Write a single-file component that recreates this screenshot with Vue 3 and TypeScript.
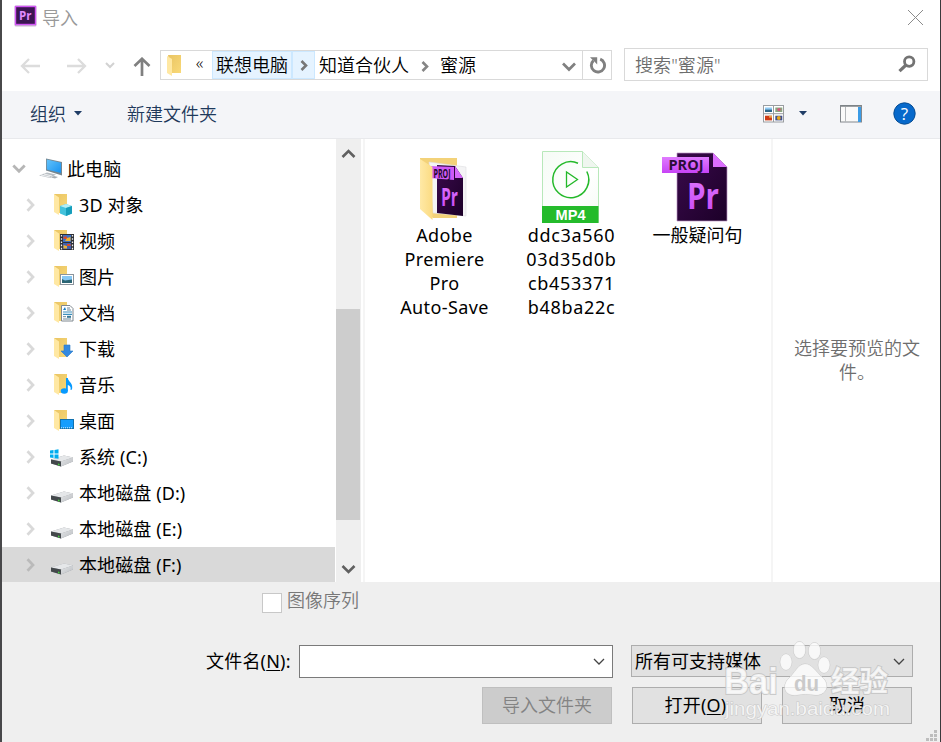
<script setup lang="ts">
interface TreeItem {
  label: string
  icon: string
  folder?: boolean
  root?: boolean
  selected?: boolean
}

interface FileItem {
  icon: 'folder' | 'mp4' | 'proj'
  lines: string[]
}

const tree: TreeItem[] = [
  { label: '此电脑', icon: 'pc', root: true },
  { label: '3D 对象', icon: 'cube', folder: true },
  { label: '视频', icon: 'video', folder: true },
  { label: '图片', icon: 'picture', folder: true },
  { label: '文档', icon: 'document', folder: true },
  { label: '下载', icon: 'download', folder: true },
  { label: '音乐', icon: 'music', folder: true },
  { label: '桌面', icon: 'desktop', folder: true },
  { label: '系统 (C:)', icon: 'system' },
  { label: '本地磁盘 (D:)', icon: 'disk' },
  { label: '本地磁盘 (E:)', icon: 'disk' },
  { label: '本地磁盘 (F:)', icon: 'disk', selected: true },
]

const files: FileItem[] = [
  { icon: 'folder', lines: ['Adobe', 'Premiere', 'Pro', 'Auto-Save'] },
  { icon: 'mp4', lines: ['ddc3a560', '03d35d0b', 'cb453371', 'b48ba22c'] },
  { icon: 'proj', lines: ['一般疑问句'] },
]
</script>

<template>
  <div class="dialog">
    <svg class="defs" width="0" height="0">
      <defs>
        <linearGradient id="gFolderFront" x1="0" y1="0" x2="1" y2="0">
          <stop offset="0" stop-color="#ffe9a6" />
          <stop offset="1" stop-color="#fbdb82" />
        </linearGradient>
        <linearGradient id="gFolderBack" x1="0" y1="0" x2="1" y2="1">
          <stop offset="0" stop-color="#e9c463" />
          <stop offset="1" stop-color="#f9d978" />
        </linearGradient>
        <linearGradient id="gPurple" x1="0" y1="0" x2="0" y2="1">
          <stop offset="0" stop-color="#e07bff" />
          <stop offset="1" stop-color="#c743f5" />
        </linearGradient>
        <linearGradient id="gDark" x1="0" y1="0" x2="1" y2="1">
          <stop offset="0" stop-color="#3a0a4c" />
          <stop offset="1" stop-color="#1c0028" />
        </linearGradient>
        <linearGradient id="gScreen" x1="0" y1="0" x2="1" y2="1">
          <stop offset="0" stop-color="#63c3fb" />
          <stop offset="1" stop-color="#1992ef" />
        </linearGradient>
        <linearGradient id="gDisk" x1="0" y1="0" x2="1" y2="1">
          <stop offset="0" stop-color="#e4e6e8" />
          <stop offset="1" stop-color="#b9bcc0" />
        </linearGradient>
        <linearGradient id="gPaper" x1="0" y1="0" x2="1" y2="1">
          <stop offset="0" stop-color="#f5fbf5" />
          <stop offset="0.6" stop-color="#ffffff" />
          <stop offset="1" stop-color="#f4faf4" />
        </linearGradient>
      </defs>
    </svg>

    <header class="titlebar">
      <svg class="app-icon" width="24" height="22" viewBox="0 0 24 22">
        <rect x="0.5" y="0.5" width="22" height="21" rx="1.5" fill="#c9b8d0" />
        <rect x="1.5" y="1.5" width="20" height="18" fill="#3b1552" stroke="#d255f5" stroke-width="1.4" />
        <text x="5" y="14.5" class="glyph" font-size="12" textLength="12.5" lengthAdjust="spacingAndGlyphs" fill="#e08bff">Pr</text>
      </svg>
      <span class="title">导入</span>
      <svg class="close" width="17" height="17" viewBox="0 0 17 17"><path d="M1 1L16 16M16 1L1 16" stroke="#8b8b8b" fill="none" /></svg>
    </header>

    <nav class="navbar">
      <svg class="back" width="20" height="16" viewBox="0 0 20 16"><path d="M9 1L2 8L9 15M2 8H20" class="stroke" stroke="#dcdcdc" stroke-width="2.3" /></svg>
      <svg class="forward" width="20" height="16" viewBox="0 0 20 16"><path d="M11 1L18 8L11 15M18 8H0" class="stroke" stroke="#dcdcdc" stroke-width="2.3" /></svg>
      <svg class="recent" width="10" height="7" viewBox="0 0 10 7"><path d="M1 1L5 5L9 1" class="stroke" stroke="#d2d2d2" stroke-width="2" /></svg>
      <svg class="up" width="18" height="19" viewBox="0 0 18 19"><path d="M1.5 9L9 1.8L16.5 9M9 2V19" class="stroke" stroke="#808080" stroke-width="2.7" /></svg>
      <div class="address">
        <svg class="address-folder" width="15" height="21" viewBox="0 0 15 21">
          <path d="M1 0H14V18H4Z" fill="url(#gFolderBack)" />
          <path d="M0 1L5 4V21L0 18Z" fill="#ffe8a3" />
        </svg>
        <span class="more">«</span>
        <span class="crumb hot">联想电脑</span>
        <span class="sep hot"><svg width="8" height="11" viewBox="0 0 8 11"><path d="M1.5 1L6 5.5L1.5 10" class="stroke" stroke="#777" stroke-width="2.6" /></svg></span>
        <span class="crumb second">知道合伙人</span>
        <svg class="sep-free" width="8" height="11" viewBox="0 0 8 11"><path d="M1.5 1L6 5.5L1.5 10" class="stroke" stroke="#858585" stroke-width="2.6" /></svg>
        <span class="crumb">蜜源</span>
        <svg class="drop" width="14" height="10" viewBox="0 0 14 10"><path d="M1 1.5L7 7.5L13 1.5" class="stroke" stroke="#808080" stroke-width="2.7" /></svg>
        <span class="refresh">
          <svg width="18" height="18" viewBox="0 0 18 18">
            <path d="M11.2 3.2A6.6 6.6 0 1 1 4.4 4.6" class="stroke" stroke="#808080" stroke-width="2.9" />
            <path d="M1 1.2H8.2V8.4L5.6 5.8L3.2 3.6Z" fill="#808080" />
          </svg>
        </span>
      </div>
      <div class="search">
        <span class="search-text">搜索"蜜源"</span>
        <svg width="18" height="18" viewBox="0 0 18 18">
          <circle cx="11.2" cy="6.6" r="4.7" fill="none" stroke="#737373" stroke-width="2.8" />
          <path d="M8 10L1.5 16.2" stroke="#737373" stroke-width="3.2" />
        </svg>
      </div>
    </nav>

    <div class="toolbar">
      <span class="organize">组织</span>
      <svg class="caret" width="8" height="5" viewBox="0 0 8 5"><path d="M0 0H8L4 4.6Z" fill="#1f3c66" /></svg>
      <span class="new-folder">新建文件夹</span>
      <svg class="views" width="22" height="18" viewBox="0 0 22 18">
        <rect x="0.5" y="0.5" width="20" height="16.5" fill="#fff" stroke="#999da1" />
        <path d="M10.5 0V17M0 8.7H21" stroke="#999da1" />
        <rect x="2" y="2.5" width="7" height="4.5" fill="#8fcaf4" /><rect x="2" y="4.6" width="7" height="2.4" fill="#2d6689" />
        <rect x="12.3" y="2.5" width="7" height="4.5" fill="#8aa67f" /><circle cx="16" cy="4.6" r="1.7" fill="#d6577c" />
        <rect x="2" y="10.7" width="7" height="4.7" fill="#ce3b16" /><rect x="6" y="10.7" width="3" height="2" fill="#eca24c" />
        <rect x="12.3" y="10.7" width="7" height="4.7" fill="#40508d" /><circle cx="15.8" cy="13" r="1.9" fill="#e6a61d" />
      </svg>
      <svg class="caret views-caret" width="8" height="5" viewBox="0 0 8 5"><path d="M0 0H8L4 4.6Z" fill="#1f3c66" /></svg>
      <svg class="pane-icon" width="22" height="18" viewBox="0 0 22 18">
        <rect x="0.5" y="0.5" width="21" height="16.5" fill="#fafafa" stroke="#83888d" />
        <path d="M1 1.2H21" stroke="#73787c" /><path d="M5.5 2V17" stroke="#b4b7ba" />
        <rect x="18" y="2" width="3" height="15" fill="#3c9ce6" />
      </svg>
      <svg class="help" width="23" height="23" viewBox="0 0 23 23">
        <circle cx="11.5" cy="11.5" r="10.7" fill="#0769cb" stroke="#084d93" />
        <text x="11.5" y="17.5" text-anchor="middle" class="glyph-regular" font-size="17" fill="#fff">?</text>
      </svg>
    </div>

    <main class="content">
      <div class="tree">
        <div v-for="item in tree" :key="item.label" class="tree-row" :class="{ root: item.root, selected: item.selected }">
          <span class="expander">
            <svg v-if="item.root" width="14" height="10" viewBox="0 0 14 10"><path d="M1.3 1.5L7 7.2L12.7 1.5" class="stroke" stroke="#b6b6b6" stroke-width="2.8" /></svg>
            <svg v-else width="9" height="14" viewBox="0 0 9 14"><path d="M1.5 1.2L7 7L1.5 12.8" class="stroke" :stroke="item.selected ? '#bababa' : '#d9d9d9'" stroke-width="2.7" /></svg>
          </span>
          <svg class="tree-icon" width="26" height="24" viewBox="0 0 26 24">
            <template v-if="item.folder">
              <path d="M5 1H18V20H8Z" fill="url(#gFolderBack)" />
              <path d="M5 1L10 4.5V22L5 19Z" fill="#ffe8a3" />
            </template>
            <g v-if="item.icon === 'pc'">
              <path d="M8 1.5L24 5V18.5L8 13.5Z" fill="#77868f" />
              <path d="M8.8 2.5L23 5.7V16L8.8 12.5Z" fill="url(#gScreen)" />
              <path d="M9 15.5L18 17.5L12 21L1 18.5Z" fill="#b9bfc4" />
              <path d="M3 18L12 20M6 17L14 19" stroke="#fff" stroke-width=".8" />
              <path d="M16 19L20 20L17 21.5L13 20.5Z" fill="#a7adb2" />
            </g>
            <g v-else-if="item.icon === 'cube'">
              <path d="M11 13L17 11L23 13V20.5L17 23L11 20.5Z" fill="#43c2dc" />
              <path d="M11 13L17 11L23 13L17 15Z" fill="#b4edf5" />
              <path d="M17 15L23 13V20.5L17 23Z" fill="#169ebb" />
            </g>
            <g v-else-if="item.icon === 'video'">
              <rect x="11" y="5" width="14" height="16" fill="#2e3036" />
              <rect x="14" y="6" width="8" height="7" fill="#3b71c5" /><rect x="14" y="14" width="8" height="6" fill="#3f60b0" />
              <path d="M14.5 7.5H18V10H14.5ZM18 15H21.5V17H18Z" fill="#d64a2e" />
              <path d="M18 9L21.5 8V12H16ZM14.5 16L18 17V19.5H14.5Z" fill="#ecb235" />
              <path d="M12.5 6V21M23.5 6V21" stroke="#eee" stroke-width="1.3" stroke-dasharray="1.6 1.6" />
            </g>
            <g v-else-if="item.icon === 'picture'">
              <rect x="11.5" y="9.5" width="13" height="10" fill="#fff" stroke="#8b949c" />
              <rect x="13" y="11" width="10" height="7" fill="#86c7f4" /><path d="M13 14L16 15.5L23 14.5V18H13Z" fill="#2b6574" />
            </g>
            <g v-else-if="item.icon === 'document'">
              <path d="M12.5 4.5H21L24 7.5V20H12.5Z" fill="#fff" stroke="#7f888f" />
              <path d="M14 11H23M14 13.3H23" stroke="#3c8fbc" stroke-width="1.2" /><path d="M18 7H21M18 9H22M14 15.7H17M14 18H22" stroke="#6d8797" />
              <path d="M14 9L16 6L17 9Z" fill="#187fc3" /><rect x="18" y="14.8" width="4" height="2" fill="#347797" />
            </g>
            <path v-else-if="item.icon === 'download'" d="M15 8H21V14H24L18 20L12 14H15Z" fill="#3489df" stroke="#2878c8" stroke-width=".6" />
            <g v-else-if="item.icon === 'music'">
              <ellipse cx="15.3" cy="18" rx="3.6" ry="2.8" fill="#079aff" />
              <path d="M17 5H18.8C19.3 9 24.5 10 23 16.5L21.5 17C22.3 13.5 20.5 12.5 18.8 12V18H17Z" fill="#079aff" />
            </g>
            <g v-else-if="item.icon === 'desktop'">
              <rect x="11.5" y="10.5" width="13" height="9" fill="#149dfd" stroke="#1171ae" />
              <path d="M12 18.8H24" stroke="#d5efff" stroke-dasharray="1 1" />
            </g>
            <g v-else-if="item.icon === 'disk' || item.icon === 'system'" transform="translate(1 1.6)">
              <path d="M1 13L14 9L23 11V15L11 20L1 17Z" fill="#9b9fa3" />
              <path d="M1 13L14 9L23 11L11 15Z" fill="#e5e7e9" />
              <path d="M11 15L23 11V15L11 20Z" fill="url(#gDisk)" />
              <path d="M1 13L11 15V20L1 17Z" fill="#43484b" />
              <path d="M8 17L9.5 17.4V19L8 18.6Z" fill="#43d53c" />
              <path v-if="item.icon === 'system'" d="M0 4L3.5 3.5V7H0ZM4.5 3.3L8.5 2.7V7H4.5ZM0 8H3.5V11.5L0 11ZM4.5 8H8.5V12.2L4.5 11.6Z" fill="#00adef" />
            </g>
          </svg>
          <span class="tree-label">{{ item.label }}</span>
        </div>
      </div>
      <div class="scrollbar">
        <svg width="15" height="11" viewBox="0 0 15 11"><path d="M1.5 9L7.5 3L13.5 9" class="stroke" stroke="#606060" stroke-width="2.6" /></svg>
        <div class="track"><div class="thumb"></div></div>
        <svg width="15" height="11" viewBox="0 0 15 11"><path d="M1.5 2L7.5 8L13.5 2" class="stroke" stroke="#606060" stroke-width="2.6" /></svg>
      </div>
      <div class="files">
        <div v-for="file in files" :key="file.icon" class="file" :class="file.icon">
          <svg v-if="file.icon === 'folder'" width="72" height="72" viewBox="0 0 72 72">
            <path d="M11 7H48V67H24L11 55Z" fill="#f3d279" />
            <path d="M20 11L57 16V65L24 62Z" fill="#f4f4f5" stroke="#dedee0" stroke-width=".6" />
            <path d="M28 14L46 15L54 27V65L28 62Z" fill="url(#gDark)" />
            <path d="M46 15L54 27H46Z" fill="#d668fb" />
            <path d="M20 15L45 16V29L20 27Z" fill="#cf59f7" />
            <text x="24.5" y="26.5" class="glyph" font-size="12" textLength="17" lengthAdjust="spacingAndGlyphs" fill="#210a2a">PROJ</text>
            <text x="32" y="55" class="glyph" font-size="25" textLength="17" lengthAdjust="spacingAndGlyphs" fill="url(#gPurple)">Pr</text>
            <path d="M11 8L23.5 16V69L11 58Z" fill="url(#gFolderFront)" />
          </svg>
          <svg v-else-if="file.icon === 'mp4'" width="72" height="72" viewBox="0 0 72 72">
            <path d="M6.5 .5H46.5L62.5 16.5V71.5H6.5Z" fill="url(#gPaper)" stroke="#b8e8ba" />
            <path d="M46.5 .5V16.5H62.5" fill="#eff6ef" stroke="#b8e8ba" />
            <path d="M42 12.2A18 18 0 1 0 50.8 20.5" class="stroke" stroke="#24b92a" stroke-width="1.5" />
            <path d="M30.5 21V36L41.5 28.5Z" class="stroke" stroke="#24b92a" stroke-width="1.3" />
            <rect x="6" y="55" width="56.5" height="17" fill="#24bb2b" />
            <text x="34.5" y="68.5" text-anchor="middle" class="mp4-text" font-size="14" textLength="30" lengthAdjust="spacingAndGlyphs" fill="#fff">MP4</text>
          </svg>
          <svg v-else width="72" height="72" viewBox="0 0 72 72">
            <path d="M15 2H51L65 16V70H15Z" fill="url(#gDark)" stroke="#ba94c3" stroke-width=".7" />
            <path d="M51 2L65 16H51Z" fill="#dc6eff" />
            <rect x="0" y="6" width="47" height="16" fill="url(#gPurple)" />
            <text x="6.5" y="19.3" class="glyph" font-size="15" textLength="35" lengthAdjust="spacingAndGlyphs" fill="#2c0d39">PROJ</text>
            <text x="25" y="58" class="glyph" font-size="35" textLength="32" lengthAdjust="spacingAndGlyphs" fill="url(#gPurple)">Pr</text>
          </svg>
          <span v-for="line in file.lines" :key="line" class="file-line">{{ line }}</span>
        </div>
      </div>
      <aside class="preview">选择要预览的文件。</aside>
    </main>

    <footer class="footer">
      <label class="sequence"><span class="checkbox"></span><span class="seq-label">图像序列</span></label>
      <div class="fields">
        <span class="name-label">文件名(<u>N</u>):</span>
        <div class="combo name-input">
          <svg width="12" height="7" viewBox="0 0 12 7"><path d="M1 1L6 6L11 1" class="stroke" stroke="#444" stroke-width="1.3" /></svg>
        </div>
        <div class="combo type-select">
          <span>所有可支持媒体</span>
          <svg width="12" height="7" viewBox="0 0 12 7"><path d="M1 1L6 6L11 1" class="stroke" stroke="#444" stroke-width="1.3" /></svg>
        </div>
      </div>
      <div class="buttons">
        <button class="btn disabled" type="button">导入文件夹</button>
        <button class="btn open" type="button">打开(<u>O</u>)</button>
        <button class="btn" type="button">取消</button>
      </div>
    </footer>

    <svg class="grip" width="11" height="11" viewBox="0 0 11 11"><path d="M8 0h3v3h-3zM4 4h3v3h-3zM8 4h3v3h-3zM0 8h3v3h-3zM4 8h3v3h-3zM8 8h3v3h-3z" fill="#bdbdbd" /></svg>

    <svg class="watermark" width="180" height="86" viewBox="0 0 180 86">
      <g fill="#fff" fill-opacity=".75" stroke="#c4c4c4" stroke-opacity=".85" paint-order="stroke">
        <ellipse cx="64" cy="23" rx="5.8" ry="8" />
        <ellipse cx="77.5" cy="11" rx="6" ry="8.3" />
        <ellipse cx="92.5" cy="12" rx="6" ry="8.3" />
        <ellipse cx="102" cy="26" rx="5.8" ry="8" />
        <path d="M83 25C90 25 94 33 100 38C109 46 104 57 93 56C87 55 80 55 75 56C63 58 59 47 67 39C73 34 76 25 83 25Z" />
        <text x="2" y="55" class="wm-bold" font-size="37" textLength="54" lengthAdjust="spacingAndGlyphs" stroke-width="2">Bai</text>
        <text x="109" y="53" class="wm-cjk" font-size="29" textLength="57" lengthAdjust="spacingAndGlyphs" stroke-width="2">经验</text>
        <text x="3" y="76" class="wm-url" font-size="19" textLength="165" lengthAdjust="spacingAndGlyphs" stroke-width="1">jingyan.baidu.com</text>
      </g>
      <text x="72" y="52" class="wm-bold" font-size="22" textLength="25" lengthAdjust="spacingAndGlyphs" fill="#cacaca">du</text>
    </svg>
  </div>
</template>

<style>
body { margin: 0; overflow: hidden; }
</style>

<style scoped>
.dialog {
  position: relative; box-sizing: border-box; width: 941px; height: 742px; display: flex; flex-direction: column;
  border-left: 2px solid #48484a; border-right: 1px solid #39393b; background: #fff; color: #000;
  font: 400 18px/24px "Noto Sans", "Noto Sans CJK SC", sans-serif;
}
svg { display: block; flex: none; }
.defs { position: absolute; }
.stroke { fill: none; }
.glyph { font-family: "Open Sans", sans-serif; font-weight: 700; }
.glyph-regular { font-family: "Open Sans", sans-serif; font-weight: 400; }
.mp4-text { font-family: "Liberation Sans", sans-serif; font-weight: 700; }

.titlebar { height: 37px; flex: none; display: flex; align-items: flex-start; box-sizing: border-box; padding: 5px 16px 0 12px; }
.title { margin: 1px 0 0 4px; color: #999; font-weight: 350; }
.close { margin: 4px 0 0 auto; }

.navbar { height: 54px; flex: none; display: flex; align-items: center; padding: 0 12px 0 18px; }
.back { margin-top: 3px; }
.forward { margin: 3px 0 0 27px; }
.recent { margin: 2px 0 0 18px; }
.up { margin: 4px 0 0 18px; }
.address { box-sizing: border-box; flex: none; width: 452px; height: 30px; margin: 2px 0 0 9px; border: 1px solid #d9d9d9; display: flex; align-items: center; white-space: nowrap; }
.address-folder { margin-left: 6px; }
.more { width: 25px; padding: 0 0 4px 5px; text-align: center; font-size: 17px; line-height: 22px; font-weight: 350; }
.crumb { line-height: 28px; font-weight: 350; }
.hot { background: #e5f3ff; box-shadow: inset 0 0 0 1px #cce8ff; }
.crumb.hot { width: 80px; text-align: center; }
.sep { width: 23px; height: 28px; display: flex; align-items: center; justify-content: center; }
.crumb.second { margin-left: 4px; }
.sep-free { margin: 2px 11px 0 12px; }
.drop { margin: 3px 6px 0 auto; }
.refresh { width: 28px; height: 28px; border-left: 1px solid #d9d9d9; display: flex; align-items: center; justify-content: center; }
.refresh svg { margin-left: 1px; }
.search { box-sizing: border-box; flex: none; width: 304px; height: 33px; margin: 0 0 0 12px; border: 1px solid #d9d9d9; padding: 0 11px 0 10px; display: flex; align-items: center; justify-content: space-between; color: #6d6d6d; }
.search-text { margin-top: 1px; font-weight: 350; letter-spacing: .1px; }

.toolbar { box-sizing: border-box; height: 48px; flex: none; display: flex; align-items: center; background: #f4f5f8; border-bottom: 1px solid #e8e9ec; color: #1e395b; padding: 0 24px 2px 28px; font-weight: 350; }
.caret { margin-left: 8px; }
.new-folder { margin-left: 45px; }
.views { margin-left: auto; }
.views-caret { margin-left: 14px; }
.pane-icon { margin-left: 33px; }
.help { margin-left: 31px; }

.content { height: 443px; flex: none; display: flex; overflow: hidden; }
.tree { width: 333px; flex: none; padding-top: 12px; overflow: hidden; }
.tree-row { height: 36px; display: flex; align-items: center; }
.tree-row.selected { background: #d9d9d9; }
.expander { width: 9px; margin-left: 24px; display: flex; flex: none; }
.root .expander { width: 14px; margin-left: 10px; }
.tree-icon { margin-left: 14px; }
.tree-label { margin-left: 4px; letter-spacing: .1px; }
.root .tree-icon { margin-left: 12px; }
.root .tree-label { margin-left: 3px; }
.scrollbar { box-sizing: border-box; width: 25px; margin-left: 1px; padding: 9px 0 7px; flex: none; background: #efefef; display: flex; flex-direction: column; align-items: center; }
.track { flex: 1; width: 100%; padding-top: 150px; box-sizing: border-box; }
.thumb { width: 24px; height: 211px; background: #cdcdcd; }
.files { box-sizing: border-box; width: 408px; margin-left: 2px; border-left: 2px solid #f5f5f5; padding: 12px 0 0 15px; display: flex; flex: none; }
.file { box-sizing: border-box; width: 127px; flex: none; display: flex; flex-direction: column; align-items: center; }
.file.folder, .file.mp4 { padding-left: 2px; }
.file-line { height: 24px; white-space: nowrap; }
.folder .file-line { letter-spacing: .4px; }
.mp4 .file-line { letter-spacing: .7px; }
.preview { flex: 1; border-left: 2px solid #f5f5f5; padding: 197px 18px 0 19px; text-align: center; color: #6d6d6d; font-weight: 350; }

.footer { flex: 1; background: #efefef; }
.sequence { height: 63px; display: flex; align-items: flex-start; padding: 7px 0 0 260px; box-sizing: border-box; color: #787878; font-weight: 350; }
.checkbox { box-sizing: border-box; width: 20px; height: 20px; margin: 4px 5px 0 0; border: 1px solid #c8c8c8; background: #fff; }
.seq-label { margin-top: -1px; }
.fields { height: 42px; display: flex; align-items: flex-start; }
.name-label { width: 85px; margin: 4px 8px 0 204px; white-space: nowrap; letter-spacing: .2px; }
u { text-decoration-thickness: 1px; text-underline-offset: 2px; }
.combo { box-sizing: border-box; height: 33px; border: 1px solid #7a7a7a; background: #fff; display: flex; align-items: center; justify-content: space-between; padding: 0 7px 0 3px; white-space: nowrap; }
.name-input { width: 314px; justify-content: flex-end; }
.type-select { width: 282px; height: 32px; margin-left: 18px; border-color: #adadad; background: #e1e1e1; }
.buttons { display: flex; gap: 20px; padding-left: 480px; }
.btn { box-sizing: border-box; width: 130px; height: 37px; padding: 0 0 1px; border: 1px solid #adadad; background: #e1e1e1; font: inherit; color: #000; }
.btn.open { letter-spacing: .2px; padding-right: 3px; }
.btn.disabled { background: #ccc; border-color: #bfbfbf; color: #838383; font-weight: 350; }
.grip { position: absolute; right: 3px; bottom: 1px; }
.watermark { position: absolute; left: 720px; top: 639px; }
.wm-bold { font-family: "Liberation Sans", sans-serif; font-weight: 700; }
.wm-cjk { font-family: "Noto Sans CJK SC", sans-serif; font-weight: 700; }
.wm-url { font-family: "Liberation Sans", sans-serif; }
</style>
